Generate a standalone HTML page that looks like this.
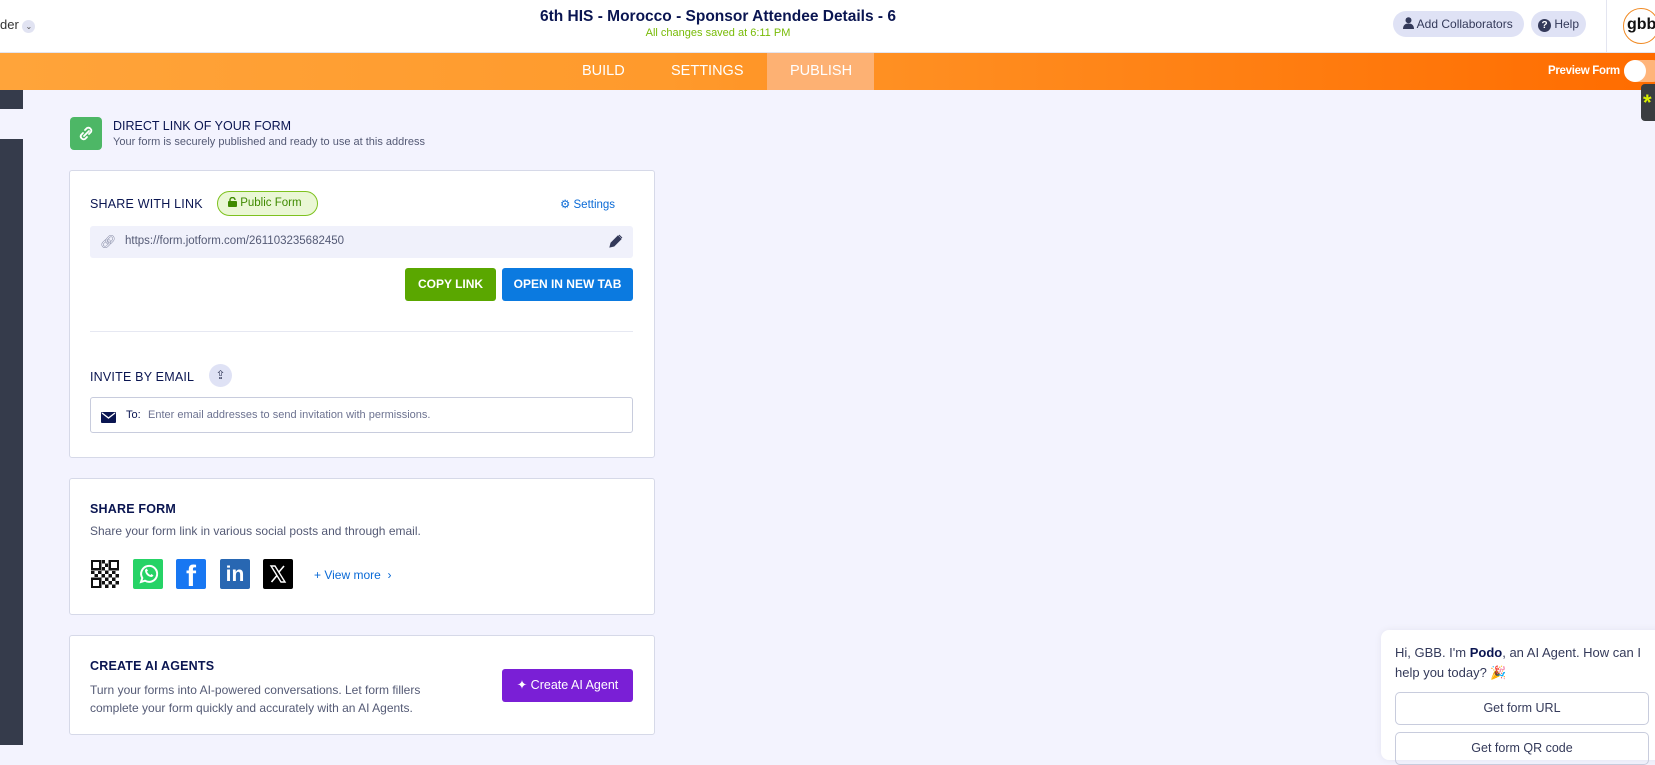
<!DOCTYPE html>
<html><head><meta charset="utf-8"><style>
*{box-sizing:border-box;margin:0;padding:0}
body{width:1655px;height:745px;overflow:hidden;background:#f3f3fe;font-family:"Liberation Sans",sans-serif;position:relative;color:#0a1551}
.a{position:absolute}
.hdr{left:0;top:0;width:1655px;height:53px;background:#fff;border-bottom:1px solid #e3e5f0}
.bar{left:0;top:53px;width:1655px;height:37px;background:linear-gradient(90deg,#ffa43a 0%,#ff9a2c 40%,#ff6c00 100%)}
.tab{top:53px;height:37px;line-height:37px;color:#fff;font-size:14.5px}
.card{background:#fff;border:1px solid #d6d9e8;border-radius:3px}
.h{font-size:12.5px;font-weight:bold;color:#0a1551;letter-spacing:.2px}
.t{font-size:12px;color:#545a75}
.btn{color:#fff;font-size:12px;font-weight:bold;text-align:center;border-radius:3px}
.ico{width:30px;height:30px;border-radius:2px}
</style></head><body>
<div class="a hdr"></div>
<div class="a" style="left:0;top:17px;font-size:13px;color:#333">der <span style="display:inline-block;width:13px;height:13px;border-radius:50%;background:#e1e3f2;font-size:8px;text-align:center;line-height:13px;color:#555">⌄</span></div>
<div class="a" style="left:418px;width:600px;top:8px;text-align:center;font-size:15.5px;font-weight:bold;color:#0a1551">6th HIS - Morocco - Sponsor Attendee Details - 6</div>
<div class="a" style="left:418px;width:600px;top:27px;text-align:center;font-size:11px;color:#78bb07">All changes saved at 6:11 PM</div>
<div class="a" style="left:1393px;top:11px;width:131px;height:26px;border-radius:13px;background:#dfe2f5;font-size:12px;line-height:26px;color:#343a5a;padding-left:10px"><svg width="11" height="12" viewBox="0 0 11 12" style="vertical-align:-1px"><circle cx="5.5" cy="3.2" r="3" fill="#343a5a"/><path d="M0 12c0-4 2.5-5.5 5.5-5.5S11 8 11 12z" fill="#343a5a"/></svg> Add Collaborators</div>
<div class="a" style="left:1531px;top:11px;width:55px;height:26px;border-radius:13px;background:#dfe2f5;font-size:12px;line-height:26px;color:#343a5a;padding-left:7px"><span style="display:inline-block;width:13px;height:13px;border-radius:50%;background:#343a5a;color:#fff;font-size:10px;line-height:13px;text-align:center;font-weight:bold">?</span> Help</div>
<div class="a" style="left:1606px;top:0;width:1px;height:53px;background:#e3e5f0"></div>
<div class="a" style="left:1623px;top:8px;width:36px;height:36px;border-radius:50%;border:1.5px solid #f08a24;background:#fff;font-size:16px;font-weight:bold;line-height:32px;padding-left:3px;color:#111">gbb</div>
<div class="a bar"></div>
<div class="a" style="left:767px;top:53px;width:107px;height:37px;background:#fdb173"></div>
<div class="a tab" style="left:582px">BUILD</div>
<div class="a tab" style="left:671px">SETTINGS</div>
<div class="a tab" style="left:790px">PUBLISH</div>
<div class="a" style="left:1548px;top:65px;font-size:11.5px;font-weight:bold;color:#fff;letter-spacing:-.3px">Preview Form</div>
<div class="a" style="left:1624px;top:60px;width:40px;height:22px;border-radius:11px;background:#ffb47a"></div>
<div class="a" style="left:1624px;top:60px;width:22px;height:22px;border-radius:50%;background:#fff"></div>
<div class="a" style="left:1641px;top:84px;width:20px;height:37px;border-radius:4px;background:#3a3d40;color:#d8f000;font-size:22px;font-weight:bold;line-height:37px;padding-left:2px">*</div>
<div class="a" style="left:0;top:90px;width:23px;height:19px;background:#353b4b"></div>
<div class="a" style="left:0;top:139px;width:23px;height:606px;background:#353b4b"></div>

<div class="a" style="left:70px;top:117px;width:32px;height:33px;border-radius:4px;background:#4db766"><svg width="32" height="33" viewBox="0 0 32 33"><g fill="none" stroke="#fff" stroke-width="1.8" stroke-linecap="round"><path d="M15 13l2-2a3 3 0 014 4l-2 2"/><path d="M17 20l-2 2a3 3 0 01-4-4l2-2"/><path d="M14 19l5-5"/></g></svg></div>
<div class="a" style="left:113px;top:119px;font-size:12.5px;color:#0a1551">DIRECT LINK OF YOUR FORM</div>
<div class="a t" style="left:113px;top:136px;font-size:11px">Your form is securely published and ready to use at this address</div>

<div class="a card" style="left:69px;top:170px;width:586px;height:288px"></div>
<div class="a h" style="left:90px;top:197px;font-weight:normal">SHARE WITH LINK</div>
<div class="a" style="left:217px;top:191px;width:101px;height:25px;border-radius:13px;border:1px solid #7ec21f;background:#eaf7d5;font-size:11.5px;line-height:23px;color:#3f8a00;padding-left:10px"><svg width="9" height="10" viewBox="0 0 9 10" style="vertical-align:-1px"><rect x="0" y="4" width="9" height="6" rx="1" fill="#3f8a00"/><path d="M2 4V3a2.5 2.5 0 015 0" fill="none" stroke="#3f8a00" stroke-width="1.4"/></svg> Public Form</div>
<div class="a" style="left:560px;top:197px;font-size:11.5px;color:#0a6ad6">⚙ Settings</div>
<div class="a" style="left:90px;top:226px;width:543px;height:32px;border-radius:3px;background:#f0f1fb"></div>
<div class="a" style="left:100px;top:234px;font-size:13px;color:#8a8fa8">🔗︎</div>
<div class="a t" style="left:125px;top:235px;font-size:11.5px;color:#545a75">https://form.jotform.com/261103235682450</div>
<div class="a" style="left:609px;top:234px"><svg width="14" height="14" viewBox="0 0 14 14"><path d="M1 13l1-4 7-7 3 3-7 7z M10 1l3 3" fill="#343a5a" stroke="#343a5a"/></svg></div>
<div class="a btn" style="left:405px;top:268px;width:91px;height:33px;line-height:33px;background:#5aa700">COPY LINK</div>
<div class="a btn" style="left:502px;top:268px;width:131px;height:33px;line-height:33px;background:#0b7ae0">OPEN IN NEW TAB</div>
<div class="a" style="left:90px;top:331px;width:543px;height:1px;background:#e6e8f2"></div>
<div class="a h" style="left:90px;top:370px;font-weight:normal">INVITE BY EMAIL</div>
<div class="a" style="left:209px;top:364px;width:23px;height:23px;border-radius:50%;background:#dfe2f5;text-align:center;line-height:23px;font-size:12px;color:#343a5a">⇪</div>
<div class="a" style="left:90px;top:397px;width:543px;height:36px;border:1px solid #c8ccdd;border-radius:3px;background:#fff"></div>
<div class="a" style="left:101px;top:410px"><svg width="15" height="11" viewBox="0 0 15 11"><rect width="15" height="11" rx="1" fill="#0a1551"/><path d="M1 1l6.5 5L14 1" fill="none" stroke="#fff" stroke-width="1.3"/></svg></div>
<div class="a" style="left:126px;top:409px;font-size:11px;color:#0a1551">To:</div>
<div class="a t" style="left:148px;top:409px;font-size:11px;color:#6c7290">Enter email addresses to send invitation with permissions.</div>

<div class="a card" style="left:69px;top:478px;width:586px;height:137px"></div>
<div class="a h" style="left:90px;top:502px">SHARE FORM</div>
<div class="a t" style="left:90px;top:524px">Share your form link in various social posts and through email.</div>
<div class="a" style="left:91px;top:560px;width:28px;height:28px;background:repeating-conic-gradient(#111 0 25%,#fff 0 50%) 0 0/7px 7px"></div>
<div class="a" style="left:91px;top:560px;width:10px;height:10px;border:2.5px solid #111;background:#fff"></div>
<div class="a" style="left:109px;top:560px;width:10px;height:10px;border:2.5px solid #111;background:#fff"></div>
<div class="a" style="left:91px;top:578px;width:10px;height:10px;border:2.5px solid #111;background:#fff"></div>
<div class="a ico" style="left:133px;top:559px;background:#26d366"><svg width="30" height="30" viewBox="0 0 30 30"><path d="M8 23l1.3-4A8 8 0 1112 21.7z" fill="none" stroke="#fff" stroke-width="2"/><path d="M12 11c0 4 3 7 7 7l1.5-1.5-2-1.5-1 1c-1.5-.5-3-2-3.5-3.5l1-1-1.5-2z" fill="#fff"/></svg></div>
<div class="a ico" style="left:176px;top:559px;background:#1877f2;color:#fff;font-size:30px;font-weight:bold;text-align:center;line-height:36px;overflow:hidden">f</div>
<div class="a ico" style="left:220px;top:559px;background:#2867b2;color:#fff;font-size:21px;font-weight:bold;text-align:center;line-height:31px">in</div>
<div class="a ico" style="left:263px;top:559px;background:#000"><svg width="30" height="30" viewBox="0 0 30 30"><path d="M8 7h4l10 16h-4z" fill="none" stroke="#fff" stroke-width="1.4"/><path d="M21 7l-5.5 6.5M8.5 23l5.5-6.5" stroke="#fff" stroke-width="1.6"/></svg></div>
<div class="a" style="left:314px;top:568px;font-size:12px;color:#0a6ad6">+ View more &nbsp;›</div>

<div class="a card" style="left:69px;top:635px;width:586px;height:100px"></div>
<div class="a h" style="left:90px;top:659px">CREATE AI AGENTS</div>
<div class="a t" style="left:90px;top:681px;line-height:18px">Turn your forms into AI-powered conversations. Let form fillers<br>complete your form quickly and accurately with an AI Agents.</div>
<div class="a btn" style="left:502px;top:669px;width:131px;height:33px;line-height:33px;background:#7a1fd6;font-weight:normal;font-size:12.5px">✦ Create AI Agent</div>

<div class="a" style="left:1381px;top:630px;width:290px;height:130px;background:#fff;border-radius:8px;box-shadow:0 0 8px rgba(0,0,0,.06)"></div>
<div class="a" style="left:1395px;top:643px;font-size:13px;line-height:20px;color:#343a5a">Hi, GBB. I'm <b style="color:#0a1551">Podo</b>, an AI Agent. How can I<br>help you today? 🎉</div>
<div class="a" style="left:1395px;top:692px;width:254px;height:33px;border:1px solid #c8ccdd;border-radius:5px;text-align:center;line-height:31px;font-size:12.5px;color:#343a5a">Get form URL</div>
<div class="a" style="left:1395px;top:732px;width:254px;height:33px;border:1px solid #c8ccdd;border-radius:5px;text-align:center;line-height:31px;font-size:12.5px;color:#343a5a">Get form QR code</div>
</body></html>
